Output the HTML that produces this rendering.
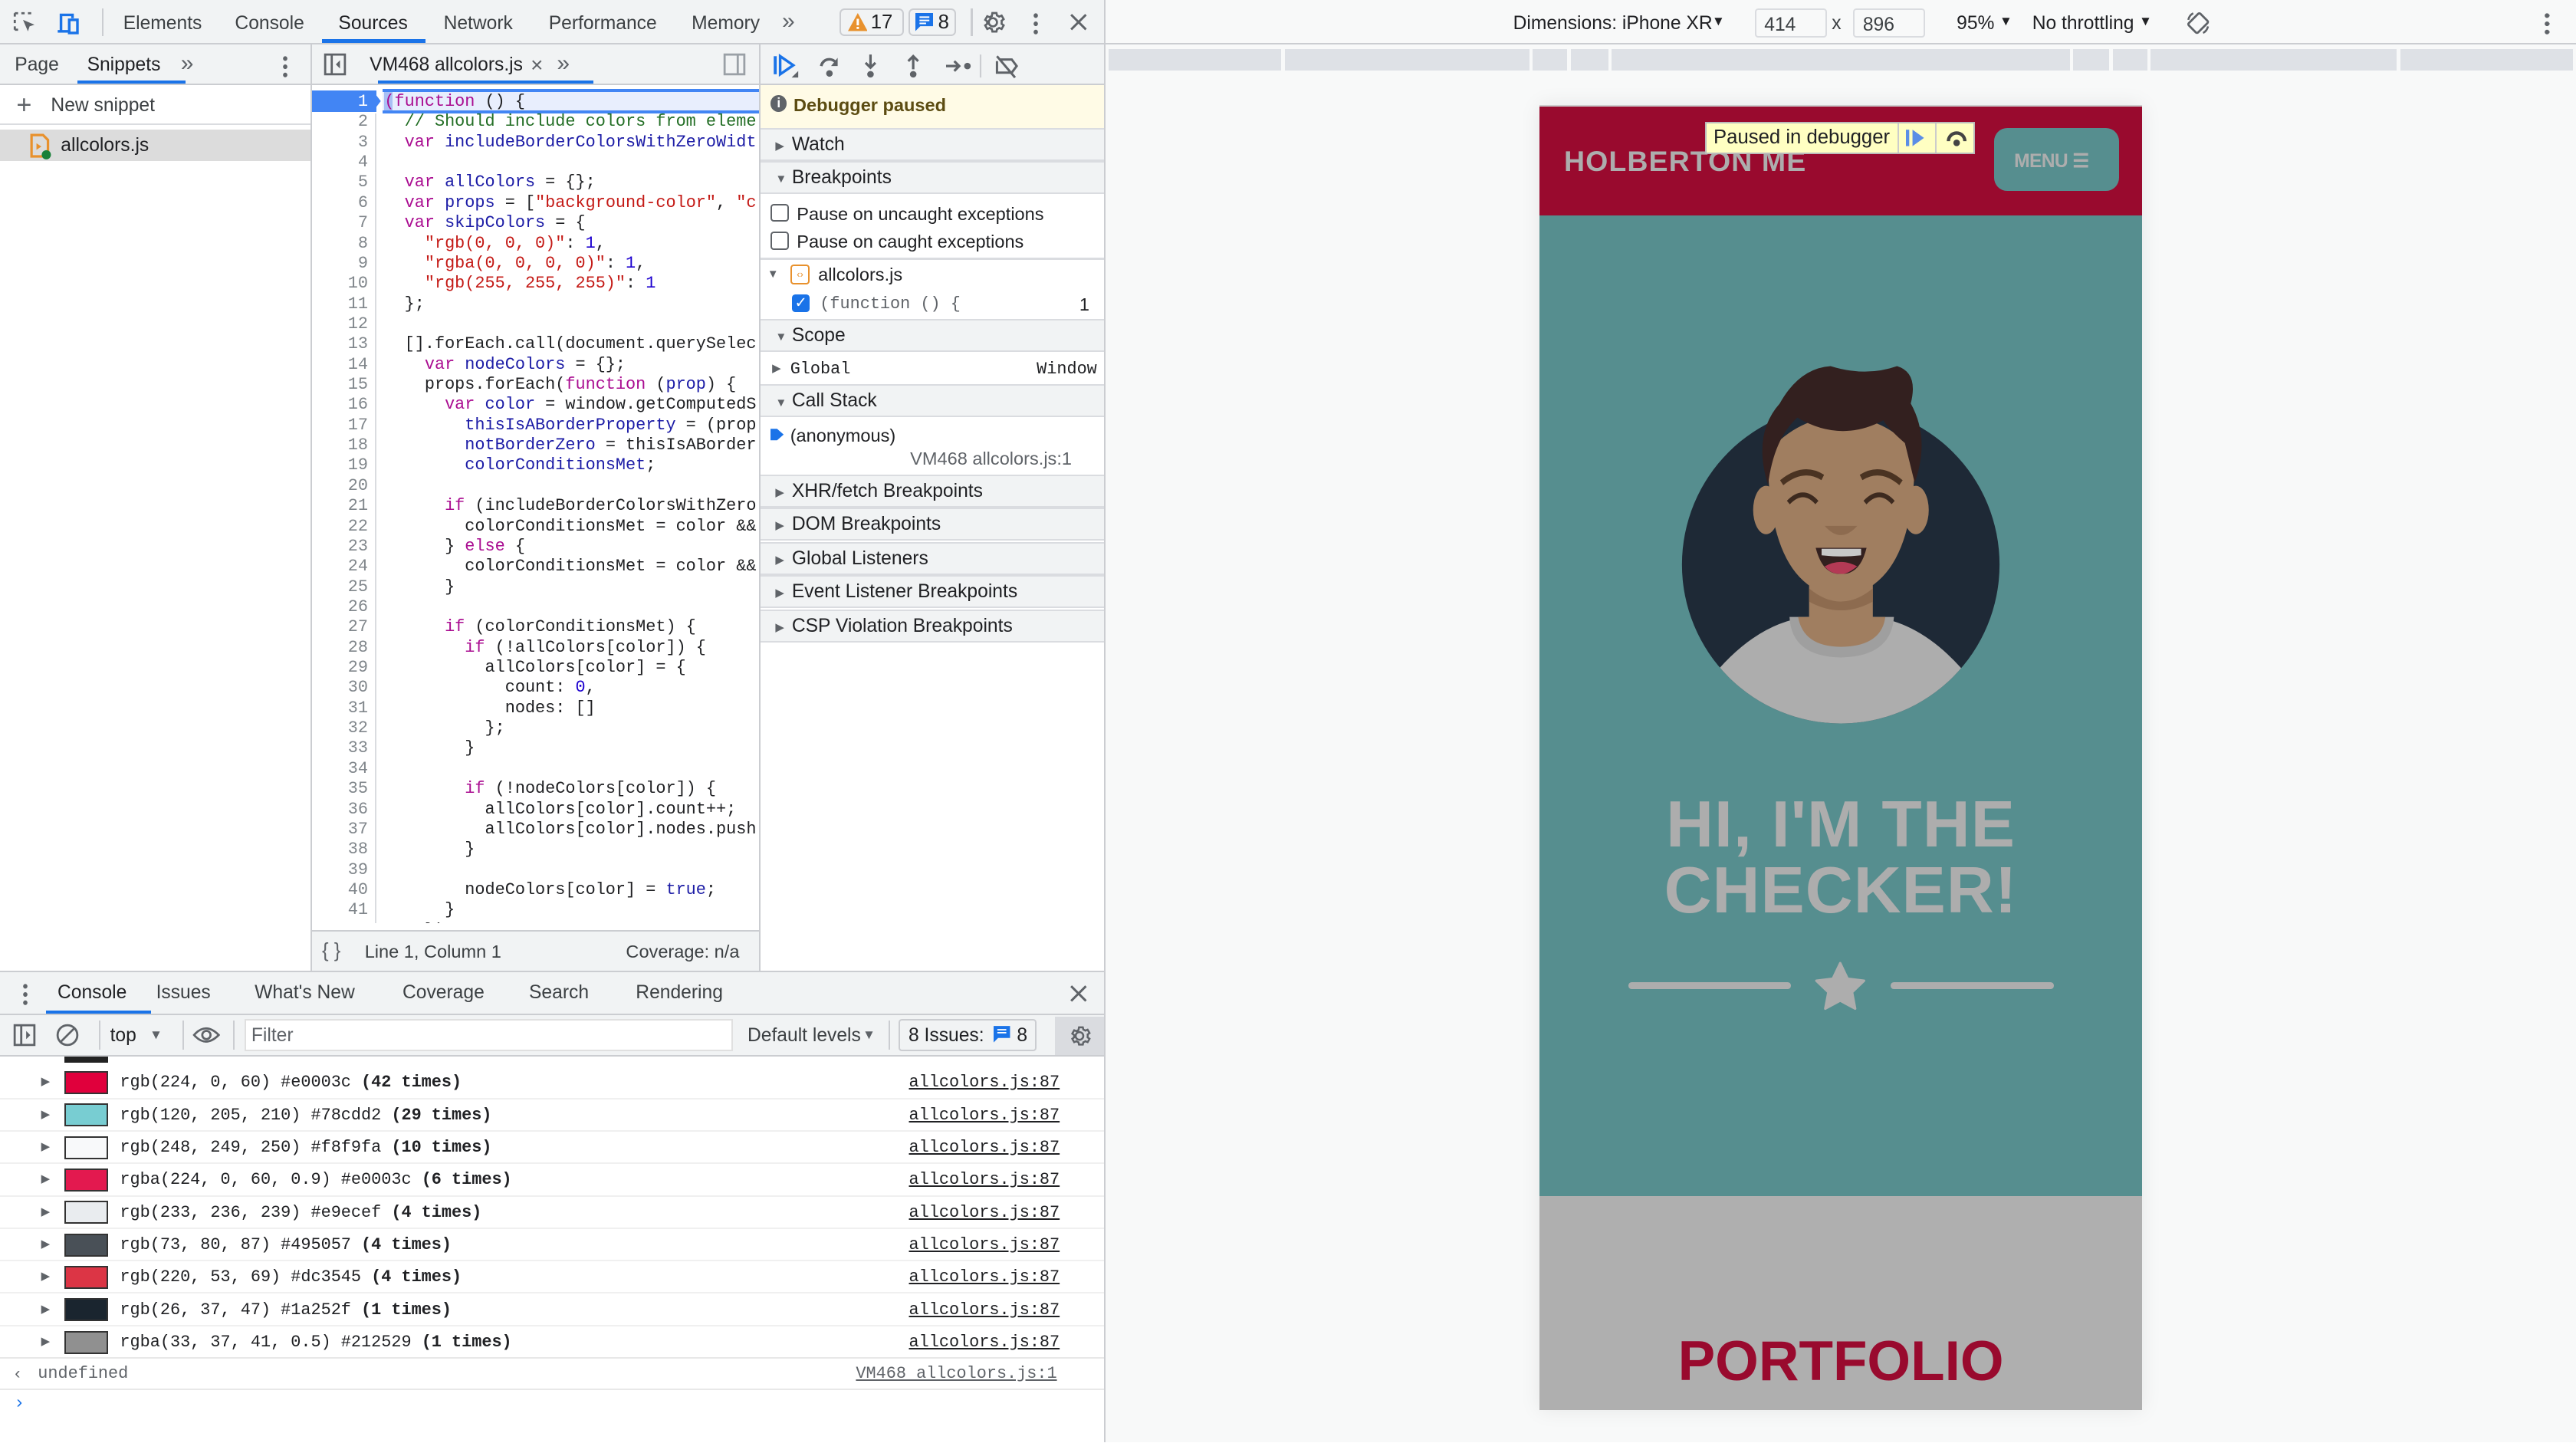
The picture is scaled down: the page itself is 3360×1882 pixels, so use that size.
<!DOCTYPE html>
<html><head><meta charset="utf-8">
<style>
*{box-sizing:border-box;margin:0;padding:0}
html,body{width:3360px;height:1882px;overflow:hidden;background:#fff}
#r{position:absolute;left:0;top:0;width:1568px;height:878px;zoom:2.142857;font-family:"Liberation Sans",sans-serif;font-size:11.5px;color:#202124;overflow:hidden}
.a{position:absolute;white-space:nowrap}
.m{font-family:"Liberation Mono",monospace}
.k{color:#aa0d91}.v{color:#1c1ca6}.s{color:#c41a16}.n{color:#1c00cf}.c{color:#236e25}
.ln{position:absolute;left:190px;width:34px;text-align:right;color:#80868b;font-family:"Liberation Mono",monospace;font-size:10.2px}
.cl{position:absolute;left:234px;font-family:"Liberation Mono",monospace;font-size:10.2px;white-space:pre;color:#202124}
.hd{position:absolute;left:463px;width:209px;height:20px;background:#f1f3f4;border-bottom:1px solid #dadce0;border-top:1px solid #dadce0;font-size:11.5px;line-height:19px;padding-left:19px;color:#202124}
.tri{position:absolute;left:9px;top:0;font-size:7px;color:#5f6368}
.row{position:absolute;left:0;width:672px;height:20px;border-bottom:1px solid #f0f0f0}
.sw{position:absolute;left:39px;top:3px;width:27px;height:14px;border:1px solid #333}
.rt{position:absolute;left:73px;top:4px;font-family:"Liberation Mono",monospace;font-size:10.2px;color:#202124}
.lk{position:absolute;right:27px;top:4px;font-family:"Liberation Mono",monospace;font-size:10.2px;color:#202124;text-decoration:underline}
.ar{position:absolute;left:25px;top:5px;font-size:7px;color:#5f6368}
</style></head><body><div id="r">

<div class="a" style="left:0;top:0;width:672px;height:27px;background:#f1f3f4;border-bottom:1px solid #cbcdd1"></div>
<svg class="a" style="left:7px;top:6px" width="16" height="16" viewBox="0 0 16 16"><path d="M2 2h2M6 2h2M10 2h2M2 2v2M2 6v2M2 10v2M2 12h2" stroke="#5f6368" stroke-width="1.3" fill="none"/><path d="M7 6l7 3-3 1-1 3z" fill="#5f6368"/></svg>
<svg class="a" style="left:33px;top:6px" width="16" height="16" viewBox="0 0 16 16"><path d="M4 13V3h7v2" stroke="#1a73e8" stroke-width="1.6" fill="none"/><rect x="9" y="6" width="5" height="8" stroke="#1a73e8" stroke-width="1.6" fill="none"/><path d="M2 13h7" stroke="#1a73e8" stroke-width="1.6"/></svg>
<div class="a" style="left:62px;top:5px;width:1px;height:17px;background:#cbcdd1"></div>
<div class="a" style="left:75px;top:8px;color:#3c4043">Elements</div>
<div class="a" style="left:143px;top:8px;color:#3c4043">Console</div>
<div class="a" style="left:206px;top:8px;color:#202124">Sources</div>
<div class="a" style="left:196px;top:24px;width:63px;height:2px;background:#1a73e8"></div>
<div class="a" style="left:270px;top:8px;color:#3c4043">Network</div>
<div class="a" style="left:334px;top:8px;color:#3c4043">Performance</div>
<div class="a" style="left:421px;top:8px;color:#3c4043">Memory</div>
<div class="a" style="left:476px;top:5px;color:#5f6368;font-size:14px">»</div>
<div class="a" style="left:511px;top:5px;width:39px;height:17px;border:1px solid #cbcdd1;border-radius:3px;background:#f1f3f4"></div>
<svg class="a" style="left:516px;top:8px" width="12" height="11" viewBox="0 0 12 11"><path d="M6 0L12 11H0z" fill="#e8912d"/><rect x="5.3" y="3.5" width="1.4" height="4" fill="#fff"/><rect x="5.3" y="8.4" width="1.4" height="1.3" fill="#fff"/></svg>
<div class="a" style="left:530px;top:7px;font-size:12px">17</div>
<div class="a" style="left:553px;top:5px;width:29px;height:17px;border:1px solid #cbcdd1;border-radius:3px"></div>
<svg class="a" style="left:557px;top:8px" width="11" height="12" viewBox="0 0 11 12"><path d="M0 0h11v8H3l-3 3z" fill="#1a73e8"/><path d="M2.5 2.5h6M2.5 4.5h6M2.5 6.3h4" stroke="#fff" stroke-width=".9"/></svg>
<div class="a" style="left:571px;top:7px;font-size:12px">8</div>
<div class="a" style="left:591px;top:5px;width:1px;height:17px;background:#cbcdd1"></div>
<svg class="a" style="left:597px;top:6px" width="15" height="15" viewBox="0 0 24 24"><path d="M12 8a4 4 0 100 8 4 4 0 000-8zm8.5 5.5l2 1.5-2 3.5-2.4-1a8 8 0 01-2.1 1.2L15.5 21h-4l-.5-2.3a8 8 0 01-2.1-1.2l-2.4 1-2-3.5 2-1.5a8 8 0 010-2.4l-2-1.5 2-3.5 2.4 1a8 8 0 012.1-1.2L11.5 3h4l.5 2.3a8 8 0 012.1 1.2l2.4-1 2 3.5-2 1.5a8 8 0 010 2.4z" fill="none" stroke="#5f6368" stroke-width="2"/></svg>
<div class="a" style="left:629px;top:7px;width:3px;height:14px;background:radial-gradient(circle,#5f6368 1.3px,transparent 1.5px) 0 0/3px 5px"></div>
<svg class="a" style="left:651px;top:8px" width="11" height="11"><path d="M1 1l9 9M10 1l-9 9" stroke="#5f6368" stroke-width="1.4"/></svg>

<div class="a" style="left:0;top:27px;width:672px;height:25px;background:#f1f3f4;border-bottom:1px solid #cbcdd1"></div>
<div class="a" style="left:9px;top:33px;color:#3c4043">Page</div>
<div class="a" style="left:53px;top:33px">Snippets</div>
<div class="a" style="left:47px;top:49px;width:66px;height:2px;background:#1a73e8"></div>
<div class="a" style="left:110px;top:31px;color:#5f6368;font-size:14px">»</div>
<div class="a" style="left:172px;top:33px;width:3px;height:14px;background:radial-gradient(circle,#5f6368 1.3px,transparent 1.5px) 0 0/3px 5px"></div>
<div class="a" style="left:189px;top:27px;width:1px;height:564px;background:#cbcdd1"></div>
<svg class="a" style="left:197px;top:32px" width="14" height="14"><rect x="1" y="1" width="12" height="12" fill="none" stroke="#5f6368" stroke-width="1.3"/><path d="M5 1v12" stroke="#5f6368" stroke-width="1.3"/><path d="M10 4.5L7.5 7 10 9.5z" fill="#5f6368"/></svg>
<div class="a" style="left:225px;top:33px">VM468 allcolors.js</div>
<div class="a" style="left:323px;top:32px;color:#5f6368;font-size:13px">×</div>
<div class="a" style="left:339px;top:31px;color:#5f6368;font-size:14px">»</div>
<div class="a" style="left:230px;top:49px;width:131px;height:2px;background:#1a73e8"></div>
<svg class="a" style="left:440px;top:32px" width="14" height="14"><rect x="1" y="1" width="12" height="12" fill="none" stroke="#9aa0a6" stroke-width="1.3"/><path d="M9 1v12" stroke="#9aa0a6" stroke-width="1.3"/></svg>
<div class="a" style="left:462px;top:27px;width:1px;height:564px;background:#cbcdd1"></div>
<svg class="a" style="left:471px;top:32px" width="150" height="16" viewBox="0 0 150 16">
<path d="M1 2v11" stroke="#1a73e8" stroke-width="1.8"/><path d="M4 2l8 5.5L4 13z" fill="none" stroke="#1a73e8" stroke-width="1.6"/><path d="M15 15h-4l4-4z" fill="#5f6368"/>
<path d="M29 8a5 5 0 019-2" fill="none" stroke="#5f6368" stroke-width="1.6"/><path d="M39 3v5h-4z" fill="#5f6368"/><circle cx="34" cy="12.5" r="2" fill="#5f6368"/>
<path d="M59 1v8M56 6l3 3 3-3" fill="none" stroke="#5f6368" stroke-width="1.5"/><circle cx="59" cy="13" r="2" fill="#5f6368"/>
<path d="M85 10V2M82 5l3-3 3 3" fill="none" stroke="#5f6368" stroke-width="1.5"/><circle cx="85" cy="13" r="2" fill="#5f6368"/>
<path d="M105 8h8M110 5l3 3-3 3" fill="none" stroke="#5f6368" stroke-width="1.5"/><circle cx="118" cy="8" r="2" fill="#5f6368"/>
<path d="M126 1v14" stroke="#cbcdd1"/>
<path d="M138 4h7l3 4-3 4h-9V5M136 2l11 13" fill="none" stroke="#5f6368" stroke-width="1.4"/></svg>

<div class="a" style="left:0;top:52px;width:189px;height:24px;border-bottom:1px solid #dadce0"></div>
<div class="a" style="left:10px;top:55px;font-size:16px;color:#5f6368;font-weight:300">+</div>
<div class="a" style="left:31px;top:58px;color:#3c4043">New snippet</div>
<div class="a" style="left:0;top:79px;width:189px;height:19px;background:#dcdcdc"></div>
<svg class="a" style="left:18px;top:81px" width="14" height="16"><path d="M1 1h7l3 3v10H1z" fill="none" stroke="#e8912d" stroke-width="1.5"/><path d="M4 6l3 2-3 2z" fill="#e8912d"/><circle cx="10" cy="13" r="2.8" fill="#188038"/></svg>
<div class="a" style="left:37px;top:82px;color:#202124">allcolors.js</div>

<div class="a" style="left:190px;top:55px;width:39px;height:13px;background:#4285f4"></div>
<svg class="a" style="left:227px;top:55px" width="6" height="13"><path d="M0 0l5 6.5L0 13z" fill="#4285f4"/></svg>
<div class="a" style="left:233px;top:54px;width:229px;height:15px;background:#e8eefd;border-top:2px solid #4285f4;border-bottom:2px solid #4285f4"></div>
<div class="a" style="left:234px;top:56px;width:5px;height:11px;background:#a9c0f5"></div>
<div class="a" style="left:228px;top:69px;width:1px;height:497px;background:#dadce0"></div>
<div id="code"></div>

<div class="a" style="left:190px;top:566px;width:272px;height:25px;background:#f1f3f4;border-top:1px solid #cbcdd1"></div>
<div class="a" style="left:196px;top:572px;color:#5f6368;font-size:12px">{ }</div>
<div class="a" style="left:222px;top:573px;color:#3c4043;font-size:11px">Line 1, Column 1</div>
<div class="a" style="left:381px;top:573px;color:#3c4043;font-size:11px">Coverage: n/a</div>

<div class="a" style="left:463px;top:52px;width:209px;height:26px;background:#fffbe6"></div>
<div class="a" style="left:469px;top:58px;width:10px;height:10px;border-radius:50%;background:#5f6368;color:#fff;font-size:8px;text-align:center;line-height:10px;font-weight:bold">i</div>
<div class="a" style="left:483px;top:58px;color:#5c4c12;font-weight:bold;font-size:11px">Debugger paused</div>
<div class="hd" style="top:78px"><span class="tri" style="top:1px">▶</span>Watch</div>
<div class="hd" style="top:98px"><span class="tri" style="top:1px">▼</span>Breakpoints</div>
<div class="a" style="left:469px;top:124px;width:11px;height:11px;border:1px solid #5f6368;border-radius:2px"></div>
<div class="a" style="left:485px;top:124px;font-size:11px">Pause on uncaught exceptions</div>
<div class="a" style="left:469px;top:141px;width:11px;height:11px;border:1px solid #5f6368;border-radius:2px"></div>
<div class="a" style="left:485px;top:141px;font-size:11px">Pause on caught exceptions</div>
<div class="a" style="left:463px;top:157px;width:209px;height:1px;background:#dadce0"></div>
<div class="a" style="left:467px;top:163px;font-size:7px;color:#5f6368">▼</div>
<div class="a" style="left:481px;top:161px;width:12px;height:12px;border:1.3px solid #e8912d;border-radius:2px;font-size:6px;color:#e8912d;text-align:center;line-height:10px">‹›</div>
<div class="a" style="left:498px;top:161px;font-size:11px">allcolors.js</div>
<div class="a" style="left:482px;top:179px;width:11px;height:11px;background:#1a73e8;border-radius:2px;color:#fff;font-size:9px;line-height:11px;text-align:center">✓</div>
<div class="a m" style="left:499px;top:179px;font-size:10.2px;color:#5f6368">(function () {</div>
<div class="a" style="left:657px;top:179px;font-size:11px">1</div>
<div class="hd" style="top:194px"><span class="tri" style="top:1px">▼</span>Scope</div>
<div class="a" style="left:470px;top:220px;font-size:7px;color:#5f6368">▶</div>
<div class="a m" style="left:481px;top:219px;font-size:10.2px">Global</div>
<div class="a m" style="left:631px;top:219px;font-size:10.2px">Window</div>
<div class="hd" style="top:234px"><span class="tri" style="top:1px">▼</span>Call Stack</div>
<svg class="a" style="left:469px;top:259px" width="9" height="11"><path d="M0 2h4l4 3.5L4 9H0z" fill="#1a73e8"/></svg>
<div class="a" style="left:481px;top:259px;font-size:11px">(anonymous)</div>
<div class="a" style="left:554px;top:273px;font-size:11px;color:#5f6368">VM468 allcolors.js:1</div>
<div class="hd" style="top:289px"><span class="tri" style="top:1px">▶</span>XHR/fetch Breakpoints</div>
<div class="hd" style="top:309px"><span class="tri" style="top:1px">▶</span>DOM Breakpoints</div>
<div class="hd" style="top:330px"><span class="tri" style="top:1px">▶</span>Global Listeners</div>
<div class="hd" style="top:350px"><span class="tri" style="top:1px">▶</span>Event Listener Breakpoints</div>
<div class="hd" style="top:371px"><span class="tri" style="top:1px">▶</span>CSP Violation Breakpoints</div>

<div class="a" style="left:0;top:591px;width:672px;height:27px;background:#f1f3f4;border-top:1px solid #cbcdd1;border-bottom:1px solid #cbcdd1"></div>
<div class="a" style="left:14px;top:598px;width:3px;height:14px;background:radial-gradient(circle,#5f6368 1.3px,transparent 1.5px) 0 0/3px 5px"></div>
<div class="a" style="left:35px;top:598px">Console</div>
<div class="a" style="left:28px;top:615px;width:64px;height:2px;background:#1a73e8"></div>
<div class="a" style="left:95px;top:598px;color:#3c4043">Issues</div>
<div class="a" style="left:155px;top:598px;color:#3c4043">What's New</div>
<div class="a" style="left:245px;top:598px;color:#3c4043">Coverage</div>
<div class="a" style="left:322px;top:598px;color:#3c4043">Search</div>
<div class="a" style="left:387px;top:598px;color:#3c4043">Rendering</div>
<svg class="a" style="left:651px;top:599px" width="11" height="11"><path d="M1 1l9 9M10 1l-9 9" stroke="#5f6368" stroke-width="1.4"/></svg>
<div class="a" style="left:0;top:618px;width:672px;height:25px;background:#f1f3f4;border-bottom:1px solid #cbcdd1"></div>
<svg class="a" style="left:8px;top:623px" width="14" height="14"><rect x="1" y="1" width="12" height="12" fill="none" stroke="#5f6368" stroke-width="1.3"/><path d="M5 1v12" stroke="#5f6368" stroke-width="1.3"/><path d="M8 4.5L10.5 7 8 9.5z" fill="#5f6368"/></svg>
<svg class="a" style="left:34px;top:623px" width="14" height="14"><circle cx="7" cy="7" r="6" fill="none" stroke="#5f6368" stroke-width="1.3"/><path d="M3 11l8-8" stroke="#5f6368" stroke-width="1.3"/></svg>
<div class="a" style="left:60px;top:621px;width:1px;height:18px;background:#cbcdd1"></div>
<div class="a" style="left:67px;top:624px">top</div>
<div class="a" style="left:91px;top:625px;font-size:8px;color:#5f6368">▼</div>
<div class="a" style="left:111px;top:621px;width:1px;height:18px;background:#cbcdd1"></div>
<svg class="a" style="left:117px;top:624px" width="17" height="12"><path d="M1 6Q8-2 16 6Q8 14 1 6z" fill="none" stroke="#5f6368" stroke-width="1.3"/><circle cx="8.5" cy="6" r="2.5" fill="none" stroke="#5f6368" stroke-width="1.3"/></svg>
<div class="a" style="left:142px;top:621px;width:1px;height:18px;background:#cbcdd1"></div>
<div class="a" style="left:149px;top:620px;width:297px;height:20px;background:#fff;border:1px solid #e0e0e0"></div>
<div class="a" style="left:153px;top:624px;color:#5f6368">Filter</div>
<div class="a" style="left:455px;top:624px;color:#3c4043">Default levels</div>
<div class="a" style="left:525px;top:625px;font-size:8px;color:#5f6368">▼</div>
<div class="a" style="left:541px;top:621px;width:1px;height:18px;background:#cbcdd1"></div>
<div class="a" style="left:547px;top:620px;width:84px;height:20px;border:1px solid #cbcdd1;border-radius:2px"></div>
<div class="a" style="left:553px;top:624px">8 Issues:</div>
<svg class="a" style="left:605px;top:624px" width="10" height="12" viewBox="0 0 11 12"><path d="M0 0h11v8H3l-3 3z" fill="#1a73e8"/><path d="M2.5 2.5h6M2.5 4.5h6" stroke="#fff" stroke-width=".9"/></svg>
<div class="a" style="left:619px;top:624px">8</div>
<div class="a" style="left:642px;top:619px;width:30px;height:23px;background:#dadce0"></div>
<svg class="a" style="left:650px;top:623px" width="14" height="15" viewBox="0 0 24 24"><path d="M12 8a4 4 0 100 8 4 4 0 000-8zm8.5 5.5l2 1.5-2 3.5-2.4-1a8 8 0 01-2.1 1.2L15.5 21h-4l-.5-2.3a8 8 0 01-2.1-1.2l-2.4 1-2-3.5 2-1.5a8 8 0 010-2.4l-2-1.5 2-3.5 2.4 1a8 8 0 012.1-1.2L11.5 3h4l.5 2.3a8 8 0 012.1 1.2l2.4-1 2 3.5-2 1.5a8 8 0 010 2.4z" fill="none" stroke="#5f6368" stroke-width="2"/></svg>

<div class="a" style="left:39px;top:643px;width:27px;height:4px;background:#222"></div>
<div id="rows"></div>
<div class="a" style="left:0;top:826px;width:672px;height:1px;background:#e8e8e8"></div>
<div class="a" style="left:9px;top:830px;font-size:10px;color:#5f6368">‹</div>
<div class="a m" style="left:23px;top:830px;font-size:10.2px;color:#5f6368">undefined</div>
<div class="a m" style="left:521px;top:830px;font-size:10.2px;color:#5f6368;text-decoration:underline">VM468 allcolors.js:1</div>
<div class="a" style="left:0;top:845px;width:672px;height:1px;background:#e8e8e8"></div>
<div class="a" style="left:10px;top:847px;color:#1a73e8;font-size:11px">›</div>
<div class="a" style="left:672px;top:0;width:1px;height:878px;background:#cbcdd1"></div>

<div class="a" style="left:673px;top:0;width:895px;height:878px;background:#f8f9f9"></div>
<div class="a" style="left:673px;top:26px;width:895px;height:1px;background:#cbcdd1"></div>
<div class="a" style="left:921px;top:8px;font-size:11.5px">Dimensions: iPhone XR</div>
<div class="a" style="left:1042px;top:8px;font-size:8px">▼</div>
<div class="a" style="left:1068px;top:5px;width:44px;height:18px;border:1px solid #dadce0;border-radius:2px;background:#f8f9f9;padding:3px 5px;color:#3c4043">414</div>
<div class="a" style="left:1115px;top:8px;color:#3c4043">x</div>
<div class="a" style="left:1128px;top:5px;width:44px;height:18px;border:1px solid #dadce0;border-radius:2px;background:#f8f9f9;padding:3px 5px;color:#3c4043">896</div>
<div class="a" style="left:1191px;top:8px">95%</div>
<div class="a" style="left:1217px;top:8px;font-size:8px">▼</div>
<div class="a" style="left:1237px;top:8px">No throttling</div>
<div class="a" style="left:1302px;top:8px;font-size:8px">▼</div>
<svg class="a" style="left:1330px;top:6px" width="16" height="16" viewBox="0 0 16 16"><rect x="4" y="3" width="8" height="10" rx="1" transform="rotate(45 8 8)" fill="none" stroke="#5f6368" stroke-width="1.3"/><path d="M2 6a6 6 0 013-4M14 10a6 6 0 01-3 4" fill="none" stroke="#5f6368" stroke-width="1.2"/></svg>
<div class="a" style="left:1549px;top:7px;width:3px;height:14px;background:radial-gradient(circle,#5f6368 1.3px,transparent 1.5px) 0 0/3px 5px"></div>
<div class="a" style="left:675px;top:30px;width:891px;height:13px;background:#dee1e6"></div>
<div class="a" style="left:780px;top:30px;width:2px;height:13px;background:#f8f9f9"></div>
<div class="a" style="left:931px;top:30px;width:2px;height:13px;background:#f8f9f9"></div>
<div class="a" style="left:954px;top:30px;width:2px;height:13px;background:#f8f9f9"></div>
<div class="a" style="left:979px;top:30px;width:2px;height:13px;background:#f8f9f9"></div>
<div class="a" style="left:1260px;top:30px;width:2px;height:13px;background:#f8f9f9"></div>
<div class="a" style="left:1284px;top:30px;width:2px;height:13px;background:#f8f9f9"></div>
<div class="a" style="left:1307px;top:30px;width:2px;height:13px;background:#f8f9f9"></div>
<div class="a" style="left:1459px;top:30px;width:2px;height:13px;background:#f8f9f9"></div>

<div class="a" style="left:937px;top:64px;width:367px;height:794px;box-shadow:0 0 12px rgba(0,0,0,.08)"></div>
<div class="a" style="left:937px;top:64px;width:367px;height:67px;background:#990a2e;border-top:1px solid #ccc"></div>
<div class="a" style="left:952px;top:88px;font-size:17.5px;font-weight:bold;color:#adadad;letter-spacing:0.5px">HOLBERTON ME</div>
<div class="a" style="left:1214px;top:78px;width:76px;height:38px;background:#568e8f;border-radius:8px"></div>
<div class="a" style="left:1226px;top:91px;font-size:11.5px;font-weight:bold;color:#adadad;letter-spacing:-.3px">MENU ☰</div>
<div class="a" style="left:1038px;top:74px;width:164px;height:20px;background:#ffffc2;border:1px solid #bbb"></div>
<div class="a" style="left:1043px;top:77px;font-size:12px;color:#202124">Paused in debugger</div>
<div class="a" style="left:1155px;top:75px;width:1px;height:18px;background:#ccc"></div>
<div class="a" style="left:1178px;top:75px;width:1px;height:18px;background:#ccc"></div>
<svg class="a" style="left:1160px;top:78px" width="12" height="12"><path d="M1 1v10" stroke="#5b8ee6" stroke-width="2"/><path d="M4 1l7 5-7 5z" fill="#5b8ee6"/></svg>
<svg class="a" style="left:1183px;top:78px" width="16" height="12"><path d="M3 8a5 5 0 0110 0" fill="none" stroke="#444" stroke-width="2"/><circle cx="8" cy="9" r="2" fill="#444"/></svg>
<div class="a" style="left:937px;top:131px;width:367px;height:597px;background:#568e8f"></div>
<div class="a" style="left:937px;top:728px;width:367px;height:130px;background:#afafaf"></div>

<svg class="a" style="left:933.3px;top:186.7px" width="373.3" height="420" viewBox="0 0 1568 1568" preserveAspectRatio="none">
<defs><clipPath id="cc"><ellipse cx="786" cy="586" rx="406" ry="361"/></clipPath></defs>
<ellipse cx="786" cy="586" rx="406" ry="361" fill="#1e2936"/>
<g clip-path="url(#cc)">
<path d="M440 860Q560 720 700 705L870 705Q1010 720 1130 860L1300 1100L300 1100Z" fill="#adadad"/>
<path d="M655 705Q660 795 786 797Q915 795 922 705Z" fill="#9f9f9f"/>
</g>
<rect x="705" y="620" width="163" height="100" fill="#a07e60"/>
<path d="M705 640Q786 700 868 640V670Q786 710 705 670Z" fill="#8d6b4f"/>
<path d="M677 705Q690 772 786 773Q890 772 900 705Z" fill="#a07e60"/>
<ellipse cx="595" cy="462" rx="33" ry="55" fill="#a07e60"/>
<ellipse cx="978" cy="462" rx="33" ry="55" fill="#a07e60"/>
<path d="M600 330Q598 560 700 630Q786 690 872 630Q977 560 975 330Q900 250 786 250Q680 250 600 330Z" fill="#a07e60"/>
<path d="M600 405Q560 290 630 220Q680 140 760 135Q850 160 930 135Q985 150 965 220Q1015 300 975 400L950 310Q905 275 895 258Q786 310 675 252Q615 300 600 405Z" fill="#33201f"/>
<path d="M635 400Q690 360 740 388" fill="none" stroke="#4a3322" stroke-width="14"/>
<path d="M838 388Q888 360 940 400" fill="none" stroke="#4a3322" stroke-width="14"/>
<path d="M652 445Q690 410 725 445" fill="none" stroke="#3d2a1f" stroke-width="11"/>
<path d="M848 445Q885 410 920 445" fill="none" stroke="#3d2a1f" stroke-width="11"/>
<path d="M745 498Q786 540 828 498Z" fill="#8d6b4f"/>
<path d="M722 548Q740 610 786 607Q835 610 852 548Z" fill="#33201f"/>
<path d="M737 550H838V565Q786 570 737 565Z" fill="#c8c8c8"/>
<path d="M745 590Q786 570 828 590Q800 610 786 607Q760 608 745 590Z" fill="#b33a55"/>
</svg>

<div class="a" style="left:937px;top:482px;width:367px;text-align:center;font-size:40px;line-height:40px;font-weight:bold;color:#adadad;letter-spacing:.5px">HI, I'M THE<br>CHECKER!</div>
<div class="a" style="left:991px;top:598px;width:99px;height:4px;border-radius:2px;background:#adadad"></div>
<div class="a" style="left:1151px;top:598px;width:99px;height:4px;border-radius:2px;background:#adadad"></div>
<svg class="a" style="left:1104px;top:585px" width="32" height="30" viewBox="0 0 32 30"><path d="M16 1l4.5 9.5 10 1.2-7.3 7 1.9 10L16 23.8 6.9 28.7l1.9-10-7.3-7 10-1.2z" fill="#adadad" stroke="#adadad" stroke-width="1.5" stroke-linejoin="round"/></svg>
<div class="a" style="left:937px;top:809px;width:367px;text-align:center;font-size:34px;font-weight:bold;color:#990a2e">PORTFOLIO</div>

<script>
var L=[
'<span class="k">(function</span> () {',
'  <span class="c">// Should include colors from eleme</span>',
'  <span class="k">var</span> <span class="v">includeBorderColorsWithZeroWidt</span>',
'',
'  <span class="k">var</span> <span class="v">allColors</span> = {};',
'  <span class="k">var</span> <span class="v">props</span> = [<span class="s">"background-color"</span>, <span class="s">"c</span>',
'  <span class="k">var</span> <span class="v">skipColors</span> = {',
'    <span class="s">"rgb(0, 0, 0)"</span>: <span class="n">1</span>,',
'    <span class="s">"rgba(0, 0, 0, 0)"</span>: <span class="n">1</span>,',
'    <span class="s">"rgb(255, 255, 255)"</span>: <span class="n">1</span>',
'  };',
'',
'  [].forEach.call(document.querySelec',
'    <span class="k">var</span> <span class="v">nodeColors</span> = {};',
'    props.forEach(<span class="k">function</span> (<span class="v">prop</span>) {',
'      <span class="k">var</span> <span class="v">color</span> = window.getComputedS',
'        <span class="v">thisIsABorderProperty</span> = (prop',
'        <span class="v">notBorderZero</span> = thisIsABorder',
'        <span class="v">colorConditionsMet</span>;',
'',
'      <span class="k">if</span> (includeBorderColorsWithZero',
'        colorConditionsMet = color &amp;&amp;',
'      } <span class="k">else</span> {',
'        colorConditionsMet = color &amp;&amp;',
'      }',
'',
'      <span class="k">if</span> (colorConditionsMet) {',
'        <span class="k">if</span> (!allColors[color]) {',
'          allColors[color] = {',
'            count: <span class="n">0</span>,',
'            nodes: []',
'          };',
'        }',
'',
'        <span class="k">if</span> (!nodeColors[color]) {',
'          allColors[color].count++;',
'          allColors[color].nodes.push',
'        }',
'',
'        nodeColors[color] = <span class="v">true</span>;',
'      }',
'    });'];
var h='';
for(var i=0;i<L.length;i++){var t=56+i*12.3;
h+='<div class="ln" style="top:'+t+'px;'+(i==0?'color:#fff':'')+'">'+(i+1)+'</div><div class="cl" style="top:'+t+'px">'+L[i]+'</div>';}
h+='<div class="a" style="left:190px;top:562px;width:272px;height:4px;background:#fff"></div>';
document.getElementById('code').innerHTML=h;
var R=[['#e0003c','rgb(224, 0, 60) #e0003c ','(42 times)'],['#78cdd2','rgb(120, 205, 210) #78cdd2 ','(29 times)'],['#f8f9fa','rgb(248, 249, 250) #f8f9fa ','(10 times)'],['rgba(224,0,60,.9)','rgba(224, 0, 60, 0.9) #e0003c ','(6 times)'],['#e9ecef','rgb(233, 236, 239) #e9ecef ','(4 times)'],['#495057','rgb(73, 80, 87) #495057 ','(4 times)'],['#dc3545','rgb(220, 53, 69) #dc3545 ','(4 times)'],['#1a252f','rgb(26, 37, 47) #1a252f ','(1 times)'],['#909090','rgba(33, 37, 41, 0.5) #212529 ','(1 times)']];
h='';
for(i=0;i<R.length;i++){var t=649+i*19.75;
h+='<div class="row" style="top:'+t+'px"><span class="ar">▶</span><div class="sw" style="background:'+R[i][0]+'"></div><div class="rt">'+R[i][1]+'<b>'+R[i][2]+'</b></div><div class="lk">allcolors.js:87</div></div>';}
document.getElementById('rows').innerHTML=h;
</script>
</div></body></html>
